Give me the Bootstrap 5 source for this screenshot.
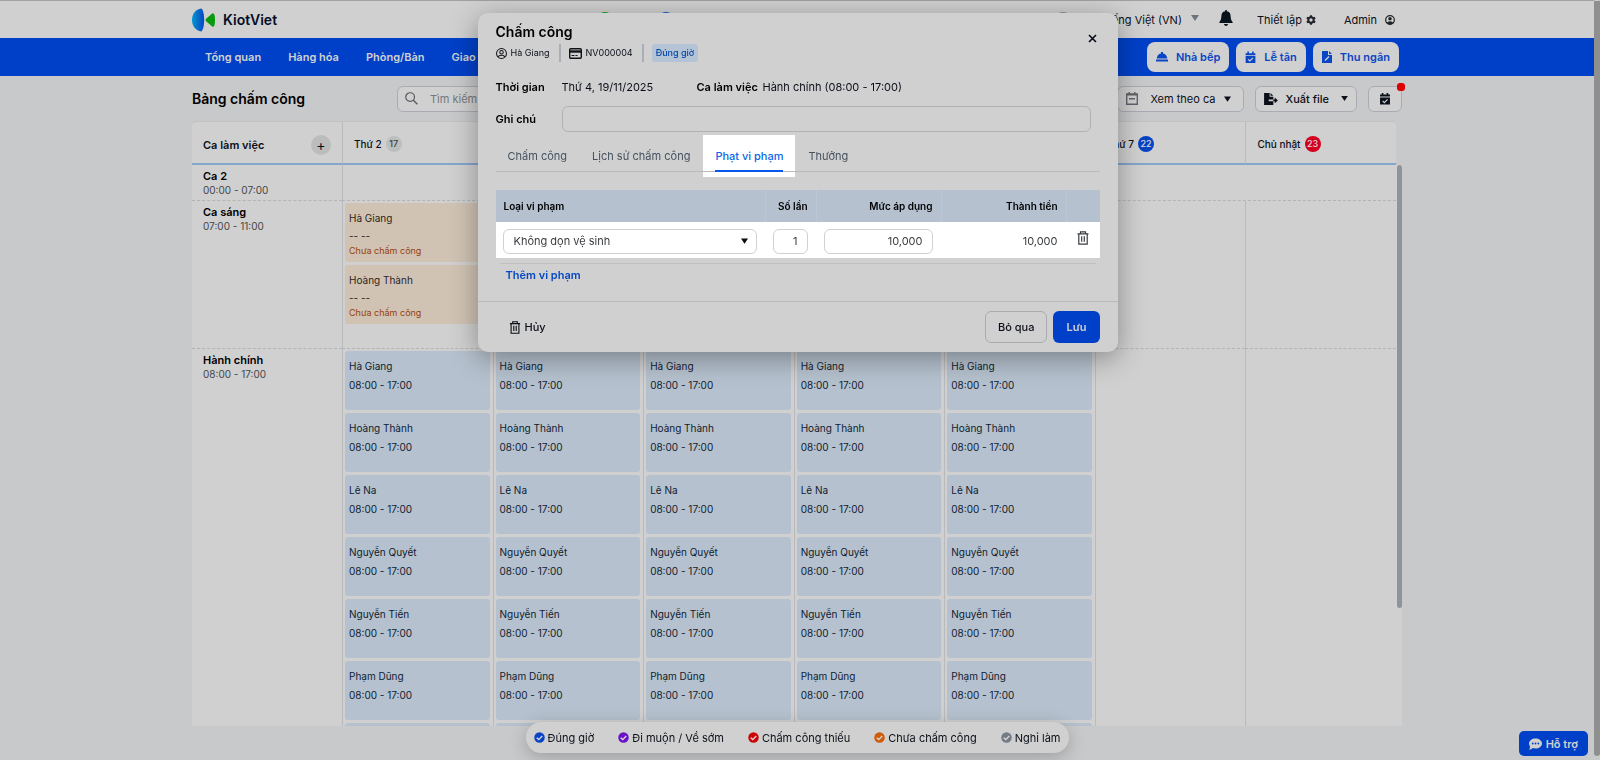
<!DOCTYPE html>
<html lang="vi">
<head>
<meta charset="utf-8">
<meta name="viewport" content="width=device-width, initial-scale=1">
<title>KiotViet - Bảng chấm công</title>
<link href="https://cdn.jsdelivr.net/npm/bootstrap@5.3.0/dist/css/bootstrap.min.css" rel="stylesheet">
<style>
:root{--surface:#d0d0d0;--page:#c8c9ca;--brand:#0040c8;--line:#b9babb;--tint:#b5c1ce;--ink:#0b0f18}
body{font-family:Inter,"Noto Sans",sans-serif;font-size:11px;line-height:16px;color:var(--ink);background:var(--page);height:100vh;overflow:hidden;padding-right:6px}
svg{display:block;flex:none}
button,input,select{font:inherit;color:inherit}
a{color:inherit;text-decoration:none}
.shell{width:100%;max-width:1210px;margin:0 auto}
.page-thumb{position:fixed;right:0;top:1px;bottom:4px;width:6px;background:#8f8f8f;border-radius:0 0 3px 3px}
.topbar{background:var(--surface);border-top:1px solid #a0a0a2;height:38px}
.brand-name{font-size:14px;font-weight:600;line-height:20px;color:#060d26}
.quick{width:405px;gap:45px}
.quick i,.lang i{width:16px;height:16px;border-radius:50%;background:#08a810}
.quick i+i{background:#0a58c8}
.lang{gap:9px}
.lang i{background:#8b8c8e;margin-right:22px}
.account{padding-right:7px}
.mainnav{background:var(--brand);height:38px}
.mainnav .links{gap:27px;padding-left:13px;color:var(--surface);font-weight:600}
.mainnav .desks{gap:7px;padding-right:3px}
.white-btn{border:0;border-radius:8px;background:var(--surface);color:#0a45c4;font-weight:600;height:30px;padding:0 9px}
.toolbar{height:45px}
.tool-title{font-size:14px;font-weight:600;line-height:20px;width:205px;margin:0;color:#000}
.tool-box{background:var(--surface);border:1px solid #a9adb3;border-radius:6px;height:26px}
.tool-find{width:280px;gap:10px;padding:0 7px}
.tool-box input{border:0;background:transparent;outline:0;width:100%}
.tool-box input::placeholder{color:#74787c;opacity:1}
.tool-actions{gap:11px}
.dot{position:absolute;top:-4px;right:-4px;width:8px;height:8px;border-radius:3px;background:#dd0000}
.content{min-height:0}
.sheet{position:relative;overflow:hidden;flex:1 1 0;min-height:0;margin-bottom:34px}
.roster{table-layout:fixed;width:calc(100% - 6px);border-collapse:separate;border-spacing:0}
.roster th,.roster td{background:var(--surface);vertical-align:top;padding:0;border-left:1px solid var(--line);border-bottom:1px dashed #b3b4b4}
.roster tr>:first-child{border-left:0;padding-left:11px}
.roster thead th{height:44px;vertical-align:middle;border-bottom:2px solid #84a5cd;border-top:1px solid #bfc1c3;font-size:10px;font-weight:500;padding:3px 0 0 11px}
.roster thead th:first-child{width:150px;font-size:11px;font-weight:600;padding-top:5px;border-top-left-radius:4px}
.roster thead th:last-child{border-top-right-radius:4px}
.plus{width:20px;height:20px;border:0;border-radius:50%;background:#bbbcbc;padding:0;margin-right:11px;font-size:14px;font-weight:400;line-height:20px}
.day{gap:4px}
.daynum{width:16px;height:16px;border-radius:50%;font-size:9px;background:#bdbebe;color:#3c3f42;font-weight:500}
.daynum.sat{background:#0643c4;color:#dcdcdc}
.daynum.sun{background:#d2001c;color:#dcdcdc}
.roster .shift{padding-top:3px}
.shift b{display:block;font-weight:600;color:#000}
.shift span{display:block;font-size:10px;line-height:12px;color:#444648}
.row-short{height:36px}.row-mid{height:148px}
.stack{display:flex;flex-direction:column;gap:3px;padding:2px 3px 0 2px}
.slot{height:59px;border-radius:3px;background:var(--tint);padding:7px 4px 0;font-size:10px;line-height:16px;color:#101c2e}
.slot time{display:block;margin-top:3px}
.slot.miss{background:#d0c3b4;color:#2c251c}
.slot.miss time{line-height:12px;margin-top:4px}
.slot.miss em{display:block;font-style:normal;font-size:9px;line-height:18px;color:#97400a}
.gutter{position:absolute;right:0;top:44px;bottom:0;width:6px;background:var(--surface)}
.gutter i{display:block;width:5px;height:79%;border-radius:3px;background:#8f949b;margin-left:1px}
.legend-bar{position:fixed;left:0;right:6px;bottom:7px}
.legend-bar ul{height:31px;border-radius:16px;background:var(--surface);box-shadow:0 4px 18px rgba(0,0,0,.22);padding:0 8px;margin:0;gap:24px;list-style:none}
.legend-bar li{display:flex;align-items:center;gap:3px}
.help{position:fixed;right:12px;bottom:4px;height:25px;border:0;border-radius:5px;background:var(--brand);color:var(--surface);font-weight:600;padding:0 10px}
.dialog-wrap{position:fixed;left:0;right:5px;top:13px}
.dialog{width:100%;max-width:640px;background:var(--surface);border-radius:10px;box-shadow:0 6px 28px rgba(0,0,0,.35)}
.dialog-body{padding:9px 18px 0}
.dialog h2{font-size:14px;font-weight:600;line-height:20px;margin:0;color:#000}
.meta{font-size:9px;height:18px;margin-top:2px}
.rule{width:2px;height:18px;background:#a9aeb6;margin:0 8px 0 9px}
.status{background:#b4c3d5;border-radius:3px;color:#0648a8;font-weight:500;height:18px;padding:1px 4px}
.close-x{position:absolute;right:13px;top:13px;border:0;background:none;padding:8px}
.fieldlabel{font-weight:600;color:#000}
.info{height:16px;margin-top:17px}
.info .fieldlabel,.note .fieldlabel{width:66px}
.info .when{width:135px}
.note{margin-top:11px;padding-right:9px}
.note input{height:26px;border:1px solid #b0b2b5;border-radius:6px;background:transparent;padding:0 8px}
.tabs{margin-top:3px;height:42px;gap:1px;position:relative;color:#46515f}
.tabs::after{content:"";position:absolute;left:0;right:0;bottom:5px;height:1px;background:var(--line)}
.tabs button{border:0;background:none;padding:0 12px;height:42px}
.tabs .on{background:#fff;color:#0a66e8;font-weight:500;position:relative}
.tabs .on::after{content:"";position:absolute;left:12px;right:12px;bottom:5px;height:2px;background:#0a57ee;z-index:1}
.fines{width:100%;table-layout:fixed;border-collapse:separate;border-spacing:0;margin-top:13px}
.fines th{background:var(--tint);height:32px;font-size:10px;font-weight:600;padding:0 8px;text-align:right;color:#000;border-left:1px solid #bcc7d2}
.fines th:first-child{text-align:left;border-left:0}
.fines td{background:#fff;height:36px;padding:2px 8px 0;text-align:right;color:#3a3d40;vertical-align:middle}
.fines td:first-child{padding-left:7px}
.fines td:last-child{padding:0 11px 0 0}
.ctl{height:25px;border:1px solid #cfd1d4;border-radius:6px;background:#fff;width:100%;display:block;color:#3a3d40}
.ctl.num{text-align:right;padding:0 9px}
.pick{position:relative}
.pick select{appearance:none;padding:0 10px}
.pick svg{position:absolute;right:9px;top:9px;pointer-events:none;color:#0a0c0e}
.fine-end{height:1px;background:#c0c0c0;margin:5px 4px 0}
.add{display:inline-block;margin:3px 10px 18px;font-weight:600;color:#0648c2}
.dialog-foot{border-top:1px solid #b9babb;padding:9px 18px}
.dialog-foot button{height:32px;border-radius:6px;font-weight:500;padding:0 13px}
.dialog-foot .btn-skip{border:1px solid #a9abaf;background:transparent;padding:0 12px;margin-right:6px}
.dialog-foot .btn-save{border:0;background:var(--brand);color:var(--surface);font-weight:600}
.btn-void{border:0;background:none}
.tone-ok{color:#0a43c8}.tone-late{color:#6a12c8}.tone-lack{color:#cc0406}.tone-none{color:#cf5a08}.tone-off{color:#737c86}
</style>
</head>
<body class="d-flex flex-column">
<svg width="0" height="0" class="position-absolute" aria-hidden="true">
  <symbol id="caret" viewBox="0 0 8 6"><path d="M0 0h8L4 6z" fill="currentColor"/></symbol>
  <symbol id="bin" viewBox="0 0 12 14"><path d="M.5 2.800h11M3.500 2.500V.8h5v1.700M1.800 3v10.200h8.400V3M4.700 5.200v5.600M7.300 5.200v5.600" fill="none" stroke="currentColor" stroke-width="1.200"/></symbol>
  <symbol id="calcheck" viewBox="0 0 14 15"><path d="M3 0h2v2h4V0h2v2h2.200V4.500H.8V2H3zM.8 5.500h12.400V14.500H.8z" fill="currentColor"/><path d="M4 9.800l2.200 2.200 4-4" fill="none" stroke="#d0d0d0" stroke-width="1.500"/></symbol>
  <symbol id="tick" viewBox="0 0 12 12"><circle cx="6" cy="6" r="5.700" fill="currentColor"/><path d="M3 6.200l2.200 2.100L9 4.300" fill="none" stroke="#d8d8d8" stroke-width="1.500"/></symbol>
</svg>

<header class="topbar flex-shrink-0">
  <div class="shell h-100 d-flex align-items-center">
    <a href="#" class="d-flex align-items-center gap-2">
      <svg width="23" height="24" viewBox="0 0 23 24"><defs><linearGradient id="lg"><stop offset="0" stop-color="#0796cf"/><stop offset="1" stop-color="#0544c4"/></linearGradient></defs><path d="M9.500 0.600C13 3.500 13 20.500 9.500 23.400 3.500 22.800 0 18 0 12S3.500 1.200 9.500 .6z" fill="url(#lg)"/><path d="M13.800 11Q13.200 12 13.800 13L20.500 18.800Q23 19.500 23 12T20.500 5.200z" fill="#069a0c"/></svg>
      <span class="brand-name">KiotViet</span>
    </a>
    <div class="quick d-flex justify-content-end"><i></i><i class="me-2"></i></div>
    <div class="account ms-auto d-flex align-items-center">
      <a href="#" class="lang d-flex align-items-center me-3 pe-1"><i></i>Tiếng Việt (VN)<svg width="8" height="6" class="text-secondary mb-1"><use href="#caret"/></svg></a>
      <svg width="14" height="16" viewBox="0 0 14 16" class="mb-1 me-4"><path d="M6.200 0h1.600v1.200C10.500 1.600 11.500 3.500 11.600 6c.1 3.500.9 4.700 2 6v1H.4v-1c1.100-1.300 1.900-2.500 2-6 .1-2.500 1.100-4.400 3.800-4.800zM5 14h4c-.3 2.500-3.700 2.500-4 0z" fill="#08121a"/></svg>
      <a href="#" class="d-flex align-items-center gap-1 me-4 pe-1">Thiết lập<svg width="10" height="10" viewBox="0 0 12 12"><g stroke="#202328" stroke-width="2.600"><path d="M6 .2v11.600M1 3.100l10 5.800M1 8.900l10-5.800"/></g><circle cx="6" cy="6" r="3.200" fill="#d0d0d0" stroke="#202328" stroke-width="2.400"/></svg></a>
      <a href="#" class="d-flex align-items-center gap-2">Admin<svg width="10" height="10" viewBox="0 0 12 12"><circle cx="6" cy="6" r="5.200" fill="none" stroke="#202328" stroke-width="1.500"/><circle cx="6" cy="4.600" r="2.100" fill="#202328"/><path d="M2 9.600Q3 7.400 6 7.400T10 9.600Q8 11.500 6 11.500T2 9.600z" fill="#202328"/></svg></a>
    </div>
  </div>
</header>

<nav class="mainnav flex-shrink-0">
  <div class="shell h-100 d-flex align-items-center">
    <div class="links d-flex"><a href="#">Tổng quan</a><a href="#">Hàng hóa</a><a href="#">Phòng/Bàn</a><a href="#">Giao dịch</a></div>
    <div class="desks ms-auto d-flex">
      <button class="white-btn d-flex align-items-center gap-2"><svg width="12" height="12" viewBox="0 0 12 12"><path d="M5 1h2v1.400C9.800 2.800 11 5 11.200 7.500H.8C1 5 2.200 2.800 5 2.400zM0 8.500h12v2H0z" fill="currentColor"/></svg>Nhà bếp</button>
      <button class="white-btn d-flex align-items-center gap-2"><svg width="11" height="13"><use href="#calcheck"/></svg>Lễ tân</button>
      <button class="white-btn d-flex align-items-center gap-2"><svg width="10" height="12" viewBox="0 0 10 12"><path d="M0 0h6v4h4v8H0zM7 0l3 3H7z" fill="currentColor"/><path d="M3 9.500l4-4" stroke="#d0d0d0" stroke-width="1.500"/></svg>Thu ngân</button>
    </div>
  </div>
</nav>

<main class="content shell d-flex flex-column flex-grow-1">
  <div class="toolbar d-flex align-items-center flex-shrink-0">
    <h1 class="tool-title">Bảng chấm công</h1>
    <label class="tool-box tool-find d-flex align-items-center"><svg width="13" height="13" viewBox="0 0 14 14"><circle cx="5.500" cy="5.500" r="4.700" fill="none" stroke="#55585c" stroke-width="1.300"/><path d="M9 9l4.300 4.300" stroke="#55585c" stroke-width="1.500"/></svg><input type="search" placeholder="Tìm kiếm nhân viên" aria-label="Tìm kiếm"></label>
    <div class="tool-actions ms-auto d-flex">
      <button class="tool-box d-flex align-items-center px-2"><svg width="12" height="13" viewBox="0 0 12 13" class="me-2"><path d="M.7 2h10.600v10.300H.7zM.7 2.800h10.600M3.200 0v2M8.800 0v2M3 6.800h6" fill="none" stroke="#606366" stroke-width="1.400"/></svg><span class="ms-1">Xem theo ca</span><svg width="7" height="6" class="ms-2 me-1"><use href="#caret"/></svg></button>
      <button class="tool-box d-flex align-items-center px-2 fw-medium"><svg width="14" height="12" viewBox="0 0 15 13" class="me-1"><path d="M0 0h6v4h4v3H5v2h5v4H0zM7 0l3 3H7zM10 7h1.500V5L15 8l-3.500 3V9H10z" fill="currentColor"/></svg><span class="ms-1 me-1">Xuất file</span><svg width="7" height="5" class="ms-2"><use href="#caret"/></svg></button>
      <button class="tool-box position-relative d-flex align-items-center justify-content-center px-2" aria-label="Duyệt"><svg width="16" height="12"><use href="#calcheck"/></svg><span class="dot"></span></button>
    </div>
  </div>
  <div class="sheet">
    <table class="roster">
      <thead><tr id="days"><th><div class="d-flex align-items-center justify-content-between">Ca làm việc<button class="plus" aria-label="Thêm ca">+</button></div></th></tr></thead>
      <tbody>
        <tr class="row-short"><td class="shift"><b>Ca 2</b><span>00:00 - 07:00</span></td><td colspan="7"></td></tr>
        <tr class="row-mid" id="morning"><td class="shift"><b>Ca sáng</b><span>07:00 - 11:00</span></td></tr>
        <tr id="office"><td class="shift"><b>Hành chính</b><span>08:00 - 17:00</span></td></tr>
      </tbody>
    </table>
    <div class="gutter"><i></i></div>
  </div>
</main>

<div class="legend-bar d-flex justify-content-center"><ul class="d-flex align-items-center">
  <li><svg width="11" height="11" class="tone-ok"><use href="#tick"/></svg>Đúng giờ</li>
  <li><svg width="11" height="11" class="tone-late"><use href="#tick"/></svg>Đi muộn / Về sớm</li>
  <li><svg width="11" height="11" class="tone-lack"><use href="#tick"/></svg>Chấm công thiếu</li>
  <li><svg width="11" height="11" class="tone-none"><use href="#tick"/></svg>Chưa chấm công</li>
  <li><svg width="11" height="11" class="tone-off"><use href="#tick"/></svg>Nghỉ làm</li>
</ul></div>
<button class="help d-flex align-items-center gap-1"><svg width="13" height="12" viewBox="0 0 13 12"><path d="M6.500.5C10 .5 13 2.600 13 5.500s-3 5-6.500 5c-1 0-2-.2-2.800-.5C2.800 11 1.500 11.500 0 11.500 .8 10.500 1.200 9.500 1 8.500 .4 7.600 0 6.600 0 5.500 0 2.600 3 .5 6.500.5z" fill="currentColor"/><g fill="#0040c8"><circle cx="3.700" cy="5.500" r=".9"/><circle cx="6.500" cy="5.500" r=".9"/><circle cx="9.300" cy="5.500" r=".9"/></g></svg>Hỗ trợ</button>
<div class="page-thumb"></div>

<div class="dialog-wrap d-flex justify-content-center">
  <section class="dialog position-relative" role="dialog" aria-labelledby="dlg">
    <button class="close-x" aria-label="Đóng"><svg width="9" height="9" viewBox="0 0 9 9"><path d="M1 1l7 7M8 1L1 8" stroke="#060b1c" stroke-width="1.600"/></svg></button>
    <div class="dialog-body">
      <h2 id="dlg">Chấm công</h2>
      <div class="meta d-flex align-items-center">
        <svg width="11" height="11" viewBox="0 0 12 12" class="me-1"><g fill="none" stroke="#101215" stroke-width="1.100"><circle cx="6" cy="6" r="5.400"/><circle cx="6" cy="4.700" r="1.900"/><path d="M2.600 9.700Q3 7.800 6 7.800T9.400 9.700"/></g></svg>Hà Giang
        <span class="rule"></span>
        <svg width="13" height="11" viewBox="0 0 13 11" class="me-1"><rect x=".7" y=".7" width="11.600" height="9.600" rx="1" fill="none" stroke="#101215" stroke-width="1.400"/><path d="M0 3.500h13" stroke="#101215" stroke-width="2.400"/><path d="M2.500 7.500h3M6.500 7.500h2" stroke="#101215"/></svg>NV000004
        <span class="rule"></span><span class="status">Đúng giờ</span>
      </div>
      <div class="info d-flex"><span class="fieldlabel">Thời gian</span><span class="when">Thứ 4, 19/11/2025</span><span class="fieldlabel">Ca làm việc</span><span>Hành chính (08:00 - 17:00)</span></div>
      <div class="note d-flex align-items-center"><label class="fieldlabel flex-shrink-0" for="note">Ghi chú</label><input id="note" type="text" class="flex-grow-1"></div>
      <div class="tabs d-flex" role="tablist"><button role="tab">Chấm công</button><button role="tab">Lịch sử chấm công</button><button role="tab" class="on" aria-selected="true">Phạt vi phạm</button><button role="tab">Thưởng</button></div>
      <table class="fines">
        <colgroup><col><col style="width:51px"><col style="width:125px"><col style="width:125px"><col style="width:34px"></colgroup>
        <thead><tr><th>Loại vi phạm</th><th>Số lần</th><th>Mức áp dụng</th><th>Thành tiền</th><th></th></tr></thead>
        <tbody><tr>
          <td><div class="pick"><select class="ctl" aria-label="Loại vi phạm"><option>Không dọn vệ sinh</option></select><svg width="7" height="6"><use href="#caret"/></svg></div></td>
          <td><input class="ctl num" value="1" aria-label="Số lần"></td>
          <td><input class="ctl num" value="10,000" aria-label="Mức áp dụng"></td>
          <td>10,000</td>
          <td><button class="btn-void p-0" aria-label="Xóa"><svg width="12" height="14"><use href="#bin"/></svg></button></td>
        </tr></tbody>
      </table>
      <div class="fine-end"></div>
      <a href="#" class="add">Thêm vi phạm</a>
    </div>
    <div class="dialog-foot d-flex align-items-center">
      <button class="btn-void d-flex align-items-center gap-1"><svg width="12" height="13"><use href="#bin"/></svg>Hủy</button>
      <button class="btn-skip ms-auto">Bỏ qua</button>
      <button class="btn-save">Lưu</button>
    </div>
  </section>
</div>

<script src="https://cdn.jsdelivr.net/npm/bootstrap@5.3.0/dist/js/bootstrap.bundle.min.js"></script>
<script>
const days=['Thứ 2','Thứ 3','Thứ 4','Thứ 5','Thứ 6','Thứ 7','Chủ nhật'];
const staff=['Hà Giang','Hoàng Thành','Lê Na','Nguyễn Quyết','Nguyễn Tiến','Phạm Dũng'];
const add=(id,html)=>document.getElementById(id).insertAdjacentHTML('beforeend',html);
days.forEach((d,i)=>{
  const tone=i===5?'sat':i===6?'sun':'';
  add('days',`<th><div class="day d-flex align-items-center">${d}<span class="daynum ${tone} d-flex align-items-center justify-content-center">${17+i}</span></div></th>`);
  const missed=i?[]:staff.slice(0,2);
  add('morning',`<td><div class="stack">${missed.map(n=>`<div class="slot miss">${n}<time>-- --</time><em>Chưa chấm công</em></div>`).join('')}</div></td>`);
  const office=i<5?staff.map(n=>`<div class="slot">${n}<time>08:00 - 17:00</time></div>`).join('')+'<div class="slot"></div>':'';
  add('office',`<td><div class="stack">${office}</div></td>`);
});
</script>
</body>
</html>
